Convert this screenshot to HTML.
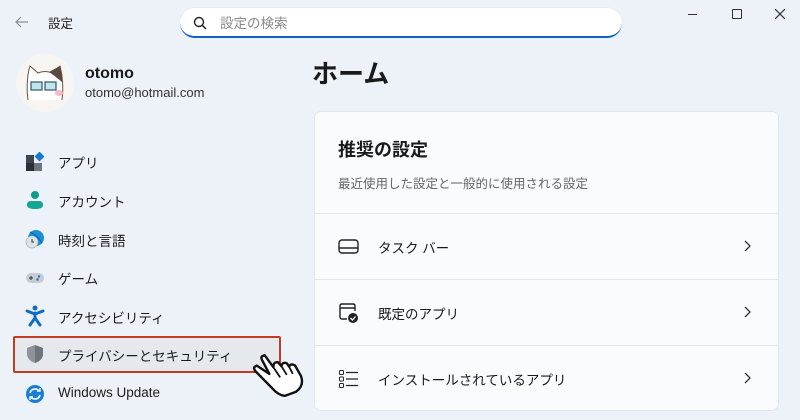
<!DOCTYPE html>
<html><head><meta charset="utf-8"><style>
*{margin:0;padding:0;box-sizing:border-box}
body{width:800px;height:420px;overflow:hidden;background:#edf2f9;font-family:"Liberation Sans","Noto Sans CJK JP",sans-serif;position:relative;color:#1a1a1a}
.abs{position:absolute}
.nav{position:absolute;left:58px;font-size:13.5px;color:#1b1b1b}
.ico{position:absolute;left:25px}
.row{position:absolute;left:315px;width:463px;height:66px;border-top:1px solid #e3e7ec}
.row span{position:absolute;left:63px;top:23px;font-size:13.5px}
.row .chev{position:absolute;left:428px;top:25px}
</style></head><body>
<svg class="abs" style="left:14px;top:15px" width="16" height="14"><path d="M14 7H2M7 2L2 7l5 5" stroke="#8a8f96" stroke-width="1.2" fill="none"/></svg>
<div class="abs" style="left:48px;top:13px;font-size:12.5px">設定</div>
<div class="abs" style="left:180px;top:8px;width:442px;height:30px;background:#fff;border-radius:15px;border-bottom:2px solid #0f62c0;box-shadow:0 0 1px #cdd3da"></div>
<svg class="abs" style="left:193px;top:16px" width="14" height="14"><circle cx="6" cy="6" r="4.5" stroke="#222" stroke-width="1.4" fill="none"/><path d="M9.3 9.3L13 13" stroke="#222" stroke-width="1.5"/></svg>
<div class="abs" style="left:220px;top:12px;font-size:13.5px;color:#8a8a8a">設定の検索</div>
<div class="abs" style="left:688px;top:14px;width:9px;height:1px;background:#333"></div>
<div class="abs" style="left:732px;top:9px;width:10px;height:10px;border:1.2px solid #333;border-radius:1px"></div>
<svg class="abs" style="left:775px;top:9px" width="10" height="10"><path d="M0 0L10 10M10 0L0 10" stroke="#333" stroke-width="1.2"/></svg>

<div class="abs" style="left:16px;top:54px;width:58px;height:58px;border-radius:50%;background:#f7f5f2"></div>
<svg class="abs" style="left:22px;top:60px" width="46" height="46"><path d="M6 40 C4 25 6 12 8 6 L16 13 Q23 10 30 13 L38 6 C40 14 42 26 40 40" stroke="#6b5040" stroke-width="1" fill="#fff"/><path d="M27 12 L38 6 C40 12 41 18 40 22 Q33 16 27 12Z" fill="#5a4a42"/><rect x="9" y="22" width="11" height="8" fill="#bfe6f0" stroke="#356" stroke-width="1.2"/><rect x="23" y="22" width="11" height="8" fill="#bfe6f0" stroke="#356" stroke-width="1.2"/><ellipse cx="37" cy="33" rx="4" ry="3" fill="#f7b9c6"/></svg>
<div class="abs" style="left:85px;top:65px;font-size:16px;font-weight:bold">otomo</div>
<div class="abs" style="left:85px;top:85px;font-size:13px;color:#333">otomo@hotmail.com</div>

<svg class="ico" style="top:152px" width="20" height="20"><rect x="1" y="3" width="8" height="8" fill="#3d4651"/><rect x="1" y="11" width="8" height="8" fill="#2b2f36"/><rect x="9" y="11" width="8" height="8" fill="#6d7580"/><rect x="11" y="1" width="7" height="7" fill="#1478d4" transform="rotate(45 14.5 4.5)"/></svg>
<div class="nav" style="top:152px">アプリ</div>
<svg class="ico" style="top:190px" width="20" height="20"><circle cx="10" cy="5" r="4" fill="#0f9d8a"/><path d="M2 15 Q2 11 6 11 H14 Q18 11 18 15 Q18 19 10 19 Q2 19 2 15Z" fill="#14a693"/></svg>
<div class="nav" style="top:191px">アカウント</div>
<svg class="ico" style="top:229px" width="20" height="20"><circle cx="11" cy="9" r="8" fill="#1a8fd6"/><path d="M5 3 Q12 6 17 14" stroke="#0b5ea8" fill="none"/><circle cx="7" cy="13" r="6" fill="#dfe3e8" stroke="#9aa" stroke-width=".6"/><path d="M7 10V13H9" stroke="#333" fill="none"/></svg>
<div class="nav" style="top:230px">時刻と言語</div>
<svg class="ico" style="top:268px" width="20" height="20"><rect x="1" y="5" width="18" height="10" rx="5" fill="#c8ccd2"/><path d="M4 10h4M6 8v4" stroke="#333"/><circle cx="14" cy="8.5" r="1.2" fill="#1478d4"/><circle cx="12.5" cy="11.5" r="1.2" fill="#1478d4"/></svg>
<div class="nav" style="top:268px">ゲーム</div>
<svg class="ico" style="top:305px" width="20" height="22"><circle cx="10" cy="3" r="2.5" fill="#0f6cc6"/><path d="M2 6 L10 9 L18 6 M10 8 V13 L5 20 M10 13 L15 20" stroke="#0f6cc6" stroke-width="3" fill="none" stroke-linecap="round"/></svg>
<div class="nav" style="top:307px">アクセシビリティ</div>

<div class="abs" style="left:13px;top:336px;width:268px;height:37px;background:#e5e9ee;border:2px solid #c23b22;border-radius:2px"></div>
<svg class="ico" style="top:344px" width="20" height="20"><path d="M10 1 L18 4 V10 Q18 16 10 19 Q2 16 2 10 V4Z" fill="#8d939a"/><path d="M10 1 L18 4 V10 Q18 16 10 19Z" fill="#6f757c"/></svg>
<div class="nav" style="top:345px">プライバシーとセキュリティ</div>
<svg class="abs" style="left:252px;top:343px" width="56" height="56"><g transform="rotate(-20 28 28)"><path d="M5 20 Q3 15 8 15 L17 27 L15 12 Q14 7 19 8 L23 22 Q25 17 29 19 L31 24 Q33 20 37 23 L38 27 Q41 24 44 28 L46 40 Q46 50 36 53 L24 53 Q18 50 15 42 L5 20Z" fill="#fff" stroke="#111" stroke-width="2.4" stroke-linejoin="round"/><path d="M23 22 L26 34 M31 24 L33 34 M38 27 L39 35" stroke="#111" stroke-width="1.8"/></g></svg>
<svg class="ico" style="top:384px" width="20" height="20"><circle cx="10" cy="10" r="9" fill="#1a7fd4"/><path d="M5 9 Q6 5 10 5 Q13 5 14 7 M15 11 Q14 15 10 15 Q7 15 6 13" stroke="#fff" stroke-width="1.6" fill="none"/><path d="M12 7h3V4M8 13H5v3" stroke="#fff" stroke-width="1.4" fill="none"/></svg>
<div class="nav" style="top:385px">Windows Update</div>

<div class="abs" style="left:312px;top:54px;font-size:26px;font-weight:bold">ホーム</div>
<div class="abs" style="left:314px;top:111px;width:465px;height:300px;background:#f9fbfd;border:1px solid #e3e7ec;border-radius:7px"></div>
<div class="abs" style="left:338px;top:136px;font-size:18px;font-weight:bold">推奨の設定</div>
<div class="abs" style="left:338px;top:173px;font-size:12.5px;color:#666">最近使用した設定と一般的に使用される設定</div>

<div class="row" style="top:213px">
<svg class="abs" style="left:23px;top:24px" width="22" height="18"><rect x="1" y="2" width="19" height="13" rx="3" stroke="#222" stroke-width="1.4" fill="none"/><path d="M1 10H20" stroke="#222" stroke-width="1.4"/></svg>
<span>タスク バー</span>
<svg class="chev" width="10" height="14"><path d="M2 2L7 7L2 12" stroke="#333" stroke-width="1.3" fill="none"/></svg></div>
<div class="row" style="top:279px">
<svg class="abs" style="left:23px;top:22px" width="22" height="22"><path d="M9 17H4Q2 17 2 15V4Q2 2 4 2H15Q17 2 17 4V9M2 6H17" stroke="#222" stroke-width="1.4" fill="none"/><circle cx="15" cy="16" r="5" fill="#222"/><path d="M12.5 16l2 2 3-3.5" stroke="#fff" stroke-width="1.3" fill="none"/></svg>
<span>既定のアプリ</span>
<svg class="chev" width="10" height="14"><path d="M2 2L7 7L2 12" stroke="#333" stroke-width="1.3" fill="none"/></svg></div>
<div class="row" style="top:345px;border-bottom:none">
<svg class="abs" style="left:23px;top:23px" width="22" height="20"><rect x="1.5" y="1.5" width="4" height="4" rx="1" stroke="#222" fill="none"/><rect x="1.5" y="8" width="4" height="4" rx="1" stroke="#222" fill="none"/><rect x="1.5" y="14.5" width="4" height="4" rx="1" stroke="#222" fill="none"/><path d="M8 3.5H20M8 10H20M8 16.5H20" stroke="#222" stroke-width="1.3"/></svg>
<span>インストールされているアプリ</span>
<svg class="chev" width="10" height="14"><path d="M2 2L7 7L2 12" stroke="#333" stroke-width="1.3" fill="none"/></svg></div>
</body></html>
